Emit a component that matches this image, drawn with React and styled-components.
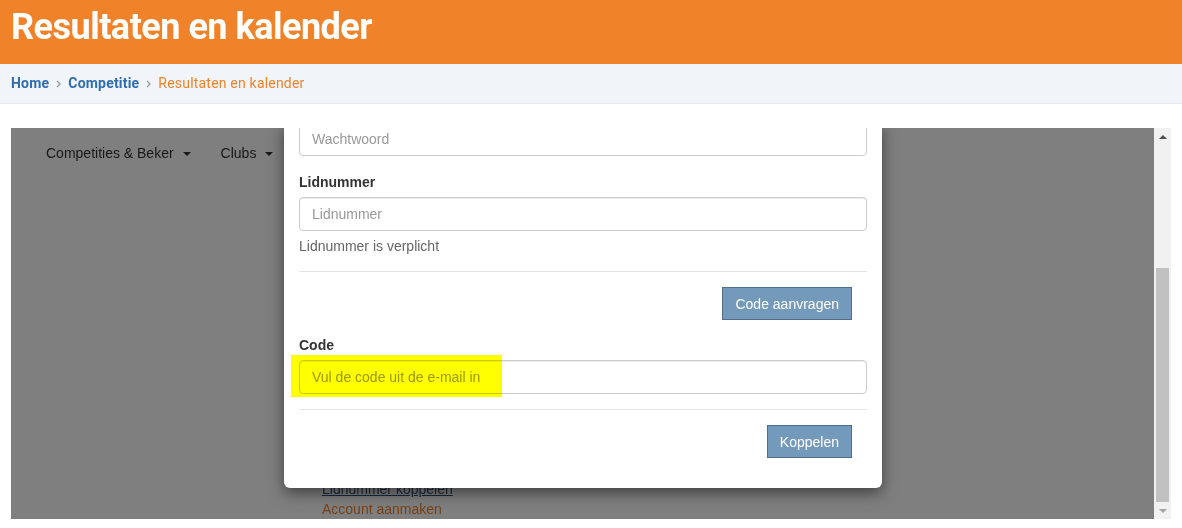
import React from 'react';
import styled, { createGlobalStyle } from 'styled-components';

const GlobalStyle = createGlobalStyle`
  html, body {
    margin: 0;
    padding: 0;
    background: #fff;
  }
  body {
    font-family: "Liberation Sans", Arial, sans-serif;
    overflow: hidden;
  }
  * {
    box-sizing: border-box;
  }
`;

const Header = styled.header`
  height: 64px;
  background: #f0832a;
  padding-left: 11px;
`;

const Title = styled.h1`
  margin: 0;
  font-family: Roboto, "DejaVu Sans", sans-serif;
  font-weight: 700;
  font-size: 36px;
  line-height: 54px;
  letter-spacing: -0.5px;
  color: #fff;
`;

const Crumbs = styled.nav`
  height: 40px;
  background: #f1f4f8;
  border-bottom: 1px solid #e4e8ed;
  padding: 0 0 1px 11px;
  display: flex;
  align-items: center;
  font-family: Roboto, "DejaVu Sans", sans-serif;
  font-size: 14px;
  letter-spacing: 0.2px;
`;

const Crumb = styled.a`
  color: ${p => (p.$current ? '#f0832a' : '#2f6db3')};
  font-weight: ${p => (p.$current ? 400 : 700)};
  text-decoration: none;
`;

const Chevron = () => (
  <svg width="5" height="8" viewBox="0 0 5 8" style={{ margin: '1px 7px 0' }}>
    <path d="M1 1l3 3-3 3" fill="none" stroke="#9a9a9a" strokeWidth="1.3" />
  </svg>
);

const Content = styled.div`
  padding: 24px 11px 0;
`;

const Frame = styled.div`
  width: 1160px;
  height: 391px;
  display: flex;
`;

const Viewport = styled.div`
  flex: 1;
  position: relative;
  overflow: hidden;
  background: #fff;
`;

const Menu = styled.ul`
  list-style: none;
  margin: 0;
  padding: 15px 0 0 20px;
  display: flex;
`;

const MenuItem = styled.li`
  padding: 0 15px;
  font-size: 14px;
  line-height: 20px;
  color: #333;
  &::after {
    content: '';
    display: inline-block;
    margin-left: 9px;
    vertical-align: middle;
    border-top: 4px solid #333;
    border-left: 4px solid transparent;
    border-right: 4px solid transparent;
  }
`;

const Links = styled.div`
  position: absolute;
  left: 311px;
  top: 351px;
  display: flex;
  flex-direction: column;
  font-size: 14px;
  line-height: 20px;
`;

const PageLink = styled.a`
  color: ${p => (p.$accent ? '#f0822a' : '#34557d')};
  text-decoration: ${p => (p.$accent ? 'none' : 'underline')};
`;

const Backdrop = styled.div`
  position: absolute;
  inset: 0;
  background: rgba(0, 0, 0, 0.5);
`;

const Modal = styled.div`
  position: absolute;
  left: 273px;
  bottom: 31px;
  width: 598px;
  background: #fff;
  border-radius: 6px;
  box-shadow: 0 5px 15px rgba(0, 0, 0, 0.5);
  padding: 0 15px 30px;
`;

const Group = styled.div`
  margin-bottom: ${p => p.$mb || 0}px;
`;

const Label = styled.label`
  display: block;
  font-weight: 700;
  font-size: 14px;
  line-height: 20px;
  color: #333;
  margin-bottom: 5px;
`;

const Field = styled.div`
  position: relative;
`;

const Input = styled.input`
  display: block;
  width: 100%;
  height: 34px;
  padding: 6px 12px;
  font-family: "Liberation Sans", Arial, sans-serif;
  font-size: 14px;
  color: #555;
  border: 1px solid #ccc;
  border-radius: 4px;
  box-shadow: inset 0 1px 1px rgba(0, 0, 0, 0.075);
  &::placeholder {
    color: #999;
  }
`;

const Marker = styled.span`
  position: absolute;
  left: -8px;
  top: -5px;
  width: 211px;
  height: 42px;
  background: #ffff00;
  mix-blend-mode: multiply;
  pointer-events: none;
`;

const Help = styled.p`
  margin: 5px 0 0;
  font-size: 14px;
  line-height: 20px;
  color: #666;
`;

const Divider = styled.hr`
  margin: 15px 0;
  border: 0;
  border-top: 1px solid #e5e5e5;
`;

const Actions = styled.div`
  display: flex;
  justify-content: flex-end;
  padding-right: 15px;
  margin-bottom: ${p => p.$mb || 0}px;
`;

const Button = styled.button`
  height: 33px;
  padding: 0 12px;
  font-family: "Liberation Sans", Arial, sans-serif;
  font-size: 14px;
  color: #fff;
  background: #7399bb;
  border: 1px solid #4f6e8c;
  border-radius: 0;
`;

const Scrollbar = styled.div`
  width: 17px;
  background: #f1f1f1;
  display: flex;
  flex-direction: column;
`;

const Arrow = styled.div`
  height: 17px;
  display: flex;
  align-items: center;
  justify-content: center;
  &::before {
    content: '';
    border-left: 4px solid transparent;
    border-right: 4px solid transparent;
    ${p => (p.$down ? 'border-top: 4px solid #a3a3a3;' : 'border-bottom: 4px solid #505050;')}
  }
`;

const Track = styled.div`
  flex: 1;
  display: flex;
  flex-direction: column;
  justify-content: flex-end;
  padding: 0 2px;
`;

const Thumb = styled.div`
  height: 234px;
  background: #c1c1c1;
`;

export default function App() {
  return (
    <>
      <GlobalStyle />
      <Header>
        <Title>Resultaten en kalender</Title>
      </Header>
      <Crumbs>
        <Crumb href="#">Home</Crumb>
        <Chevron />
        <Crumb href="#">Competitie</Crumb>
        <Chevron />
        <Crumb $current>Resultaten en kalender</Crumb>
      </Crumbs>
      <Content>
        <Frame>
          <Viewport>
            <Menu>
              <MenuItem>Competities &amp; Beker</MenuItem>
              <MenuItem>Clubs</MenuItem>
            </Menu>
            <Links>
              <PageLink href="#">Lidnummer koppelen</PageLink>
              <PageLink href="#" $accent>Account aanmaken</PageLink>
            </Links>
            <Backdrop />
            <Modal>
              <Group $mb={16}>
                <Input type="password" placeholder="Wachtwoord" />
              </Group>
              <Group>
                <Label>Lidnummer</Label>
                <Input placeholder="Lidnummer" />
                <Help>Lidnummer is verplicht</Help>
              </Group>
              <Divider />
              <Actions $mb={15}>
                <Button>Code aanvragen</Button>
              </Actions>
              <Group>
                <Label>Code</Label>
                <Field>
                  <Input placeholder="Vul de code uit de e-mail in" />
                  <Marker />
                </Field>
              </Group>
              <Divider />
              <Actions>
                <Button>Koppelen</Button>
              </Actions>
            </Modal>
          </Viewport>
          <Scrollbar>
            <Arrow />
            <Track>
              <Thumb />
            </Track>
            <Arrow $down />
          </Scrollbar>
        </Frame>
      </Content>
    </>
  );
}
